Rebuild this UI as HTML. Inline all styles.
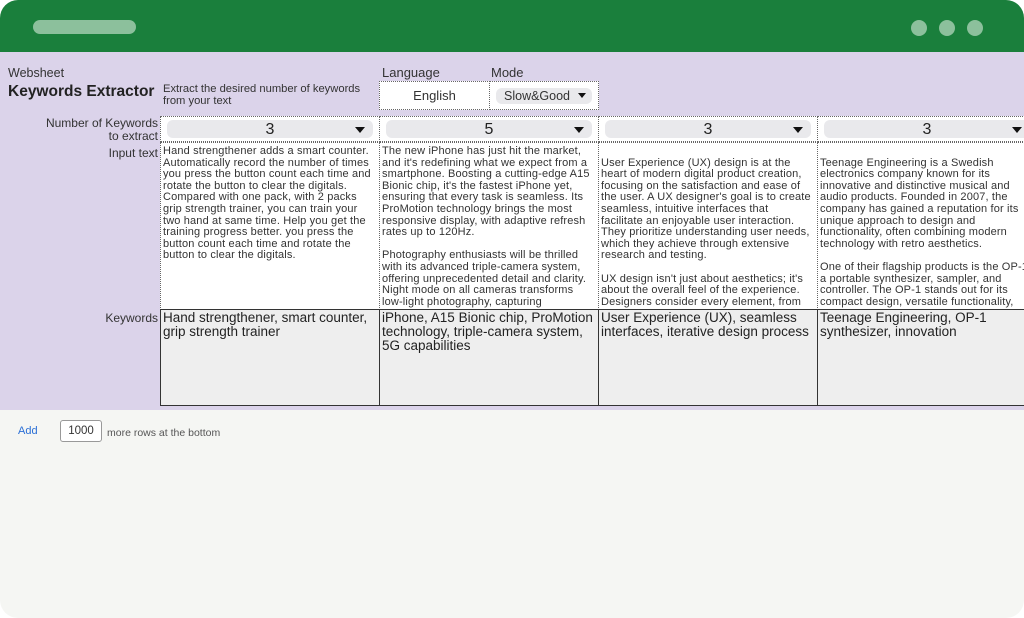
<!DOCTYPE html>
<html><head><meta charset="utf-8"><style>
*{margin:0;padding:0;box-sizing:border-box}
body{width:1024px;height:618px;background:#fff;font-family:"Liberation Sans",sans-serif;color:#333;overflow:hidden;position:relative}
.win{position:absolute;left:0;top:0;width:1024px;height:618px;border-radius:18px;overflow:hidden;background:#f5f6f3}
.hdr{position:absolute;left:0;top:0;width:1024px;height:52px;background:#1a7f3c}
.pill{position:absolute;left:33px;top:20px;width:103px;height:14px;border-radius:7px;background:#8cc09c}
.dot{position:absolute;top:20px;width:16px;height:16px;border-radius:50%;background:#8cc09c}
.main{position:absolute;left:0;top:52px;width:1024px;height:358px;background:#dbd3ea}
.a{position:absolute;white-space:nowrap}
.lbl{position:absolute;font-size:12px;color:#333;text-align:right;white-space:nowrap}
.cell{position:absolute;border:1px dotted #666;background:#fff;overflow:hidden}
.sel{position:absolute;left:6px;right:6px;top:3px;height:18px;border-radius:6px;background:#e9e9ec;text-align:center;font-size:16px;line-height:19px;color:#222}
.tri{position:absolute;right:8px;top:7px;width:0;height:0;border-left:5px solid transparent;border-right:5px solid transparent;border-top:6px solid #111}
.txt{position:absolute;left:2px;top:3px;font-size:11px;letter-spacing:0.15px;line-height:11.6px;white-space:nowrap;color:#333}
.kw{position:absolute;border:1px solid #333;background:#eeeeee;overflow:hidden;font-size:13.5px;line-height:14px;padding:1px 2px;white-space:nowrap;color:#222}
</style></head><body>
<div class="win">
<div class="hdr"><div class="pill"></div><div class="dot" style="left:911px"></div><div class="dot" style="left:939px"></div><div class="dot" style="left:967px"></div></div>
<div class="main">
<div class="a" style="left:8px;top:14px;font-size:12.5px">Websheet</div>
<div class="a" style="left:8px;top:31px;font-size:15.5px;font-weight:bold;color:#222">Keywords Extractor</div>
<div class="a" style="left:163px;top:31px;font-size:11.2px;line-height:12px">Extract the desired number of keywords<br>from your text</div>
<div class="a" style="left:382px;top:13px;font-size:13px">Language</div>
<div class="a" style="left:491px;top:13px;font-size:13px">Mode</div>
<div class="cell" style="left:379px;top:29px;width:111px;height:29px;text-align:center;font-size:13px;line-height:28px">English</div>
<div class="cell" style="left:489px;top:29px;width:110px;height:29px"><div style="position:absolute;left:6px;top:6px;width:96px;height:16px;border-radius:6px;background:#e9e9ec;font-size:12.5px;line-height:16px;padding-left:8px">Slow&amp;Good</div><div class="tri" style="right:12px;top:11px;border-left-width:4px;border-right-width:4px;border-top-width:5px"></div></div>
<div class="lbl" style="right:866px;top:65px;line-height:13px">Number of Keywords<br>to extract</div>
<div class="lbl" style="right:866px;top:94px">Input text</div>
<div class="lbl" style="right:866px;top:259px">Keywords</div>

<div class="cell" style="left:160px;top:64px;width:220px;height:26px"><div class="sel">3<div class="tri"></div></div></div>
<div class="cell" style="left:379px;top:64px;width:220px;height:26px"><div class="sel">5<div class="tri"></div></div></div>
<div class="cell" style="left:598px;top:64px;width:220px;height:26px"><div class="sel">3<div class="tri"></div></div></div>
<div class="cell" style="left:817px;top:64px;width:220px;height:26px"><div class="sel">3<div class="tri"></div></div></div>

<div class="cell" style="left:160px;top:90px;width:220px;height:168px"><div class="txt">Hand strengthener adds a smart counter.<br>Automatically record the number of times<br>you press the button count each time and<br>rotate the button to clear the digitals.<br>Compared with one pack, with 2 packs<br>grip strength trainer, you can train your<br>two hand at same time. Help you get the<br>training progress better. you press the<br>button count each time and rotate the<br>button to clear the digitals.</div></div>
<div class="cell" style="left:379px;top:90px;width:220px;height:168px"><div class="txt">The new iPhone has just hit the market,<br>and it's redefining what we expect from a<br>smartphone. Boosting a cutting-edge A15<br>Bionic chip, it's the fastest iPhone yet,<br>ensuring that every task is seamless. Its<br>ProMotion technology brings the most<br>responsive display, with adaptive refresh<br>rates up to 120Hz.<br><br>Photography enthusiasts will be thrilled<br>with its advanced triple-camera system,<br>offering unprecedented detail and clarity.<br>Night mode on all cameras transforms<br>low-light photography, capturing</div></div>
<div class="cell" style="left:598px;top:90px;width:220px;height:168px"><div class="txt" style="top:14.6px">User Experience (UX) design is at the<br>heart of modern digital product creation,<br>focusing on the satisfaction and ease of<br>the user. A UX designer's goal is to create<br>seamless, intuitive interfaces that<br>facilitate an enjoyable user interaction.<br>They prioritize understanding user needs,<br>which they achieve through extensive<br>research and testing.<br><br>UX design isn't just about aesthetics; it's<br>about the overall feel of the experience.<br>Designers consider every element, from</div></div>
<div class="cell" style="left:817px;top:90px;width:220px;height:168px"><div class="txt" style="top:14.6px">Teenage Engineering is a Swedish<br>electronics company known for its<br>innovative and distinctive musical and<br>audio products. Founded in 2007, the<br>company has gained a reputation for its<br>unique approach to design and<br>functionality, often combining modern<br>technology with retro aesthetics.<br><br>One of their flagship products is the OP-1,<br>a portable synthesizer, sampler, and<br>controller. The OP-1 stands out for its<br>compact design, versatile functionality,</div></div>

<div class="kw" style="left:160px;top:257px;width:220px;height:97px">Hand strengthener, smart counter,<br>grip strength trainer</div>
<div class="kw" style="left:379px;top:257px;width:220px;height:97px">iPhone, A15 Bionic chip, ProMotion<br>technology, triple-camera system,<br>5G capabilities</div>
<div class="kw" style="left:598px;top:257px;width:220px;height:97px">User Experience (UX), seamless<br>interfaces, iterative design process</div>
<div class="kw" style="left:817px;top:257px;width:220px;height:97px">Teenage Engineering, OP-1<br>synthesizer, innovation</div>
</div>
<div class="a" style="left:18px;top:425px;font-size:11px;color:#2a6fd6">Add</div>
<div class="a" style="left:60px;top:420px;width:42px;height:22px;border:1px solid #999;border-radius:3px;background:#fff;font-size:11.5px;line-height:20px;text-align:center">1000</div>
<div class="a" style="left:107px;top:427px;font-size:10.5px;color:#555">more rows at the bottom</div>
</div>
</body></html>
